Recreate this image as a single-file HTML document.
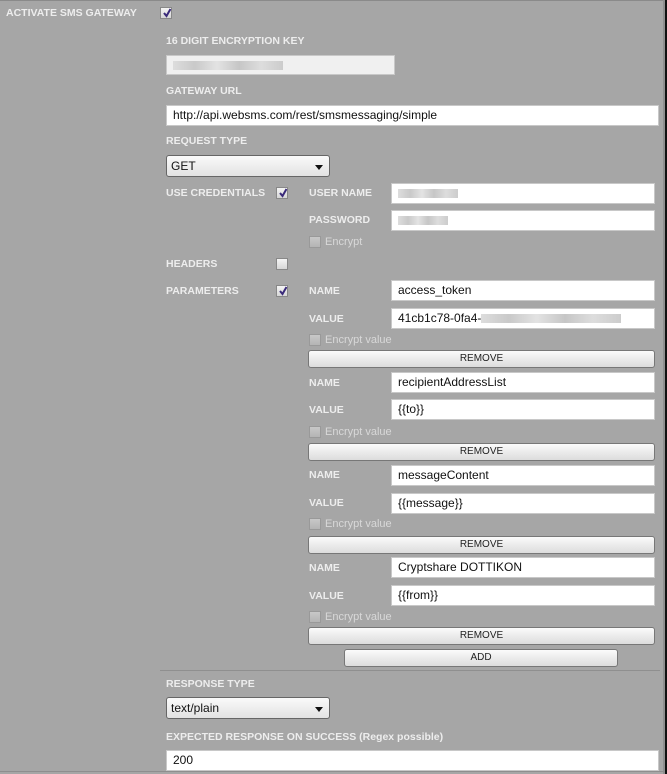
<!DOCTYPE html>
<html><head><meta charset="utf-8"><style>
body{margin:0;width:667px;height:774px;overflow:hidden;background:#a6a6a6;font-family:"Liberation Sans",sans-serif;position:relative}
.t{position:absolute;top:0;left:0;width:667px;height:1px;background:#8a8a8a}
.r1{position:absolute;top:0;right:1px;width:3px;height:774px;background:#909090}
.r2{position:absolute;top:0;right:0;width:2px;height:774px;background:#111}
.b{position:absolute;bottom:2px;left:0;width:664px;height:1px;background:#8e8e8e}
.l{position:absolute;color:#ededed;font-size:10.5px;font-weight:bold;white-space:nowrap;line-height:14px}
.e{position:absolute;color:#d8d8d8;font-size:11px;white-space:nowrap;line-height:14px}
.i{position:absolute;background:#fff;border:1px solid #c8c8c8;box-sizing:border-box;font-size:12px;color:#111;padding-left:6px;line-height:19px;white-space:nowrap;overflow:hidden}
.cb{position:absolute;width:12px;height:12px;box-sizing:border-box;border:1px solid #888;background:linear-gradient(#f4f4f4,#d6d6d6)}
.cb.d{background:linear-gradient(#c8c8c8,#b4b4b4);border-color:#999}
.cb svg{position:absolute;left:1px;top:0}
.btn{position:absolute;height:18px;box-sizing:border-box;border:1px solid #777;border-radius:3px;background:linear-gradient(#fbfbfb,#dcdcdc);font-size:10px;text-align:center;line-height:16px;color:#222}
.sel{position:absolute;height:22px;box-sizing:border-box;border:1px solid #666;border-radius:3px;background:linear-gradient(#fafafa,#e2e2e2);font-size:12px;padding-left:4px;line-height:20px;color:#111}
.sel:after{content:"";position:absolute;right:6px;top:9px;border-left:4px solid transparent;border-right:4px solid transparent;border-top:5px solid #111}
.blur{display:inline-block;height:9px;vertical-align:middle;background:linear-gradient(90deg,#ddd,#c9c9c9 20%,#e3e3e3 40%,#c6c6c6 60%,#ddd 80%,#ccc)}
.sep{position:absolute;left:160px;top:670px;width:500px;height:1px;background:#8f8f8f}
</style></head><body>
<div class="t"></div><div class="r1"></div><div class="r2"></div><div class="b"></div>
<div class="l" style="left:6px;top:6px">ACTIVATE SMS GATEWAY</div>
<div class="cb" style="left:160px;top:7px"><svg width="10" height="10"><path d="M2 5 L4.5 8 L8.5 1" stroke="#3a2a7a" stroke-width="2" fill="none"/></svg></div>
<div class="l" style="left:166px;top:34px">16 DIGIT ENCRYPTION KEY</div>
<div class="i" style="left:166px;top:55px;width:229px;height:20px;background:#f0f0f0"><span class="blur" style="width:110px"></span></div>
<div class="l" style="left:166px;top:84px">GATEWAY URL</div>
<div class="i" style="left:166px;top:105px;width:493px;height:21px">http://api.websms.com/rest/smsmessaging/simple</div>
<div class="l" style="left:166px;top:134px">REQUEST TYPE</div>
<div class="sel" style="left:166px;top:155px;width:164px">GET</div>
<div class="l" style="left:166px;top:186px">USE CREDENTIALS</div>
<div class="cb" style="left:276px;top:187px"><svg width="10" height="10"><path d="M2 5 L4.5 8 L8.5 1" stroke="#3a2a7a" stroke-width="2" fill="none"/></svg></div>
<div class="l" style="left:309px;top:186px">USER NAME</div>
<div class="i" style="left:391px;top:183px;width:264px;height:21px"><span class="blur" style="width:60px"></span></div>
<div class="l" style="left:309px;top:213px">PASSWORD</div>
<div class="i" style="left:391px;top:210px;width:264px;height:21px"><span class="blur" style="width:50px"></span></div>
<div class="cb d" style="left:309px;top:236px"></div>
<div class="e" style="left:325px;top:235px">Encrypt</div>
<div class="l" style="left:166px;top:257px">HEADERS</div>
<div class="cb" style="left:276px;top:258px"></div>
<div class="l" style="left:166px;top:284px">PARAMETERS</div>
<div class="cb" style="left:276px;top:285px"><svg width="10" height="10"><path d="M2 5 L4.5 8 L8.5 1" stroke="#3a2a7a" stroke-width="2" fill="none"/></svg></div>

<div class="l" style="left:309px;top:284px">NAME</div>
<div class="i" style="left:391px;top:280px;width:264px;height:21px">access_token</div>
<div class="l" style="left:309px;top:312px">VALUE</div>
<div class="i" style="left:391px;top:308px;width:264px;height:21px">41cb1c78-0fa4-<span class="blur" style="width:140px"></span></div>
<div class="cb d" style="left:309px;top:334px"></div>
<div class="e" style="left:325px;top:333px">Encrypt value</div>
<div class="btn" style="left:308px;top:350px;width:347px">REMOVE</div>

<div class="l" style="left:309px;top:376px">NAME</div>
<div class="i" style="left:391px;top:372px;width:264px;height:21px">recipientAddressList</div>
<div class="l" style="left:309px;top:403px">VALUE</div>
<div class="i" style="left:391px;top:399px;width:264px;height:21px">{{to}}</div>
<div class="cb d" style="left:309px;top:426px"></div>
<div class="e" style="left:325px;top:425px">Encrypt value</div>
<div class="btn" style="left:308px;top:443px;width:347px">REMOVE</div>

<div class="l" style="left:309px;top:468px">NAME</div>
<div class="i" style="left:391px;top:465px;width:264px;height:21px">messageContent</div>
<div class="l" style="left:309px;top:496px">VALUE</div>
<div class="i" style="left:391px;top:493px;width:264px;height:21px">{{message}}</div>
<div class="cb d" style="left:309px;top:518px"></div>
<div class="e" style="left:325px;top:517px">Encrypt value</div>
<div class="btn" style="left:308px;top:536px;width:347px">REMOVE</div>

<div class="l" style="left:309px;top:561px">NAME</div>
<div class="i" style="left:391px;top:557px;width:264px;height:21px">Cryptshare DOTTIKON</div>
<div class="l" style="left:309px;top:589px">VALUE</div>
<div class="i" style="left:391px;top:585px;width:264px;height:21px">{{from}}</div>
<div class="cb d" style="left:309px;top:611px"></div>
<div class="e" style="left:325px;top:610px">Encrypt value</div>
<div class="btn" style="left:308px;top:627px;width:347px">REMOVE</div>
<div class="btn" style="left:344px;top:649px;width:274px">ADD</div>

<div class="sep"></div>
<div class="l" style="left:166px;top:677px">RESPONSE TYPE</div>
<div class="sel" style="left:166px;top:697px;width:164px">text/plain</div>
<div class="l" style="left:166px;top:730px">EXPECTED RESPONSE ON SUCCESS (Regex possible)</div>
<div class="i" style="left:166px;top:750px;width:493px;height:21px">200</div>
</body></html>
